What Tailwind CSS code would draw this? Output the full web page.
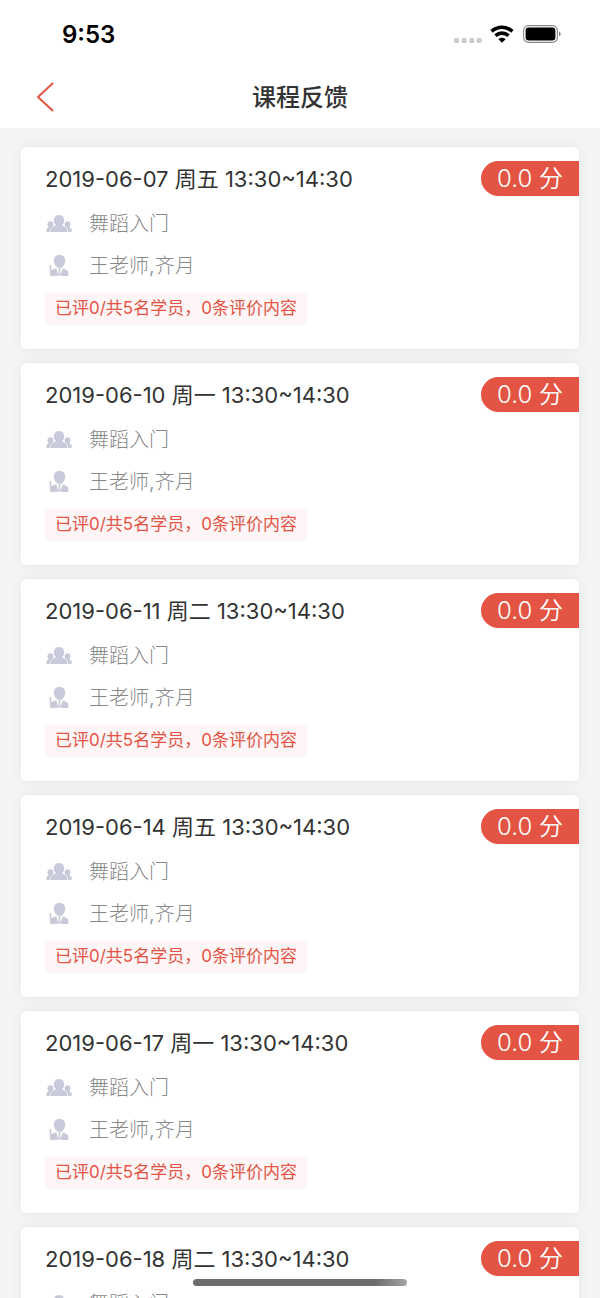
<!DOCTYPE html>
<html lang="zh-CN">
<head>
<meta charset="utf-8">
<meta name="viewport" content="width=device-width, initial-scale=1">
<title>课程反馈</title>
<script src="https://cdn.jsdelivr.net/npm/@tailwindcss/browser@4"></script>
</head>
<body class="relative flex h-screen flex-col overflow-hidden bg-[#f4f4f4] font-['Inter','Noto_Sans_CJK_SC',sans-serif] text-[#333]">
<svg class="hidden" aria-hidden="true">
  <symbol id="group" viewBox="0 0 26 18">
    <path d="M13 0c3.200 0 5.200 2.200 5.200 5.200 0 2-.8 3.700-1.900 4.700v.8c3 1 5 1.700 5 4.800V17H4.700v-1.500c0-3.100 2-3.800 5-4.800v-.8C8.600 8.900 7.800 7.200 7.800 5.200 7.800 2.200 9.800 0 13 0z"/>
    <path d="M4.400 6.200c1.900 0 3.100 1.300 3.100 3 0 .9-.3 1.600-.8 2.200-1.700.9-2.500 2.100-2.600 4V17H.3v-1.500c0-1.800.9-2.500 2.200-3.100v-.8c-.7-.5-1.100-1.400-1.100-2.400 0-1.700 1.200-3 3-3z"/>
    <path d="M21.600 6.200c-1.900 0-3.100 1.300-3.100 3 0 .9.3 1.600.8 2.200 1.700.9 2.500 2.100 2.600 4V17h3.800v-1.500c0-1.800-.9-2.500-2.200-3.100v-.8c.7-.5 1.100-1.400 1.100-2.400 0-1.700-1.200-3-3-3z"/>
  </symbol>
  <symbol id="teacher" viewBox="0 0 20 22">
    <path d="M10.500 0c3.500 0 5.700 2.200 5.700 5.500 0 2.900-1.500 5.600-3.600 7H8.400c-2.100-1.400-3.600-4.100-3.600-7C4.800 2.200 7 0 10.500 0z"/>
    <path d="M9.500 12h2l-.4 2 .6 5.500-1.200 1.500-1.200-1.500.6-5.500z"/>
    <path d="M7.300 13.200 9.500 21H1.200L.4 10.300l1.500-.2.600 5.300c1.300-1 3.100-1.400 4.800-2.200z"/>
    <path d="M13.700 13.200 11.500 21h7.900v-2.600c0-3.500-3.100-4-5.700-5.200z"/>
  </symbol>
</svg>

<header class="shrink-0 bg-white">
  <div class="flex h-[68px] items-center justify-between pr-[38px] pl-[62px]">
    <time class="pt-0.5 text-2xl font-semibold text-black">9:53</time>
    <div class="flex items-center gap-2">
      <svg class="h-5 w-7" viewBox="0 0 28 20" fill="#cbcbcb" aria-hidden="true">
        <rect x="0" y="14" width="5" height="5" rx="1.500"/><rect x="7.600" y="14" width="5" height="5" rx="1.500"/><rect x="15.200" y="14" width="5" height="5" rx="1.500"/><rect x="22.600" y="14" width="5" height="5" rx="1.500"/>
      </svg>
      <svg class="h-[18px] w-6" viewBox="0 0 24 18" fill="none" stroke="#000" stroke-width="3.600" role="img" aria-label="Wi-Fi">
        <path d="M1.600 6.300C7.600.9 16.400.9 22.400 6.300"/>
        <path d="M5.500 10.700c3.800-3.400 9.200-3.400 13 0"/>
        <path d="M12 17.800 8.400 14.300c2-2 5.200-2 7.200 0z" fill="#000" stroke="none"/>
      </svg>
      <svg class="h-[18px] w-10" viewBox="0 0 40 18" role="img" aria-label="电池">
        <rect x="1.600" y=".6" width="33.800" height="16.800" rx="5" fill="none" stroke="#888" stroke-width="1.100"/>
        <rect x="3.600" y="2.600" width="29.800" height="12.800" rx="3" fill="#000"/>
        <path d="M37 6.500c2.200.8 2.200 4.200 0 5z" fill="#888"/>
      </svg>
    </div>
  </div>
  <div class="grid h-[60px] grid-cols-[1fr_auto_1fr] items-center px-8">
    <button type="button" aria-label="返回" class="flex h-10 w-7 items-center">
      <svg class="h-8 w-7" viewBox="0 0 28 32" fill="none" stroke="#e35445" stroke-width="2" stroke-linecap="round" stroke-linejoin="round"><path d="M20.500 1.500 6 15l14.500 13.500"/></svg>
    </button>
    <h1 class="text-2xl font-medium">课程反馈</h1>
  </div>
</header>

<main class="min-h-0 flex-1 overflow-hidden px-[21px] pt-[19px]">
  <ul id="list" class="flex flex-col gap-3.5"></ul>
</main>

<div class="absolute bottom-3 left-1/2 h-[7px] w-[214px] -translate-x-1/2 rounded-full bg-linear-to-r from-[#6c6c6c] from-85% to-[#a5a5a5]"></div>

<template id="card">
  <li class="rounded-md bg-white pb-6 shadow-[0_0_14px_rgba(0,0,0,0.06)]">
    <div class="flex items-start justify-between pt-3.5 pl-6">
      <h2 class="text-[22px] leading-9"></h2>
      <span class="h-[35px] rounded-l-full bg-[#e35445] px-4 text-2xl leading-[35px] font-[350] text-white">0.0 分</span>
    </div>
    <div class="px-6 pt-1.5">
      <p class="flex h-[42px] items-center gap-4 text-[20px] font-light text-[#888]">
        <svg class="h-[18px] w-7" fill="#c9cad9" aria-hidden="true"><use href="#group"/></svg>舞蹈入门</p>
      <p class="flex h-[42px] items-center gap-4 text-[20px] font-light text-[#888]">
        <svg class="h-[22px] w-7" fill="#c9cad9" aria-hidden="true"><use href="#teacher"/></svg>王老师,齐月</p>
      <p class="mt-1.5 flex h-8 w-fit items-center bg-[#fef5f6] px-2.5 text-[17px] text-[#e35445]">已评0/共5名学员，0条评价内容</p>
    </div>
  </li>
</template>
<script>
  const lessons = ['2019-06-07 周五', '2019-06-10 周一', '2019-06-11 周二', '2019-06-14 周五', '2019-06-17 周一', '2019-06-18 周二'];
  const list = document.getElementById('list');
  for (const day of lessons) {
    const card = document.getElementById('card').content.cloneNode(true);
    card.querySelector('h2').textContent = day + ' 13:30~14:30';
    list.append(card);
  }
</script>
</body>
</html>
